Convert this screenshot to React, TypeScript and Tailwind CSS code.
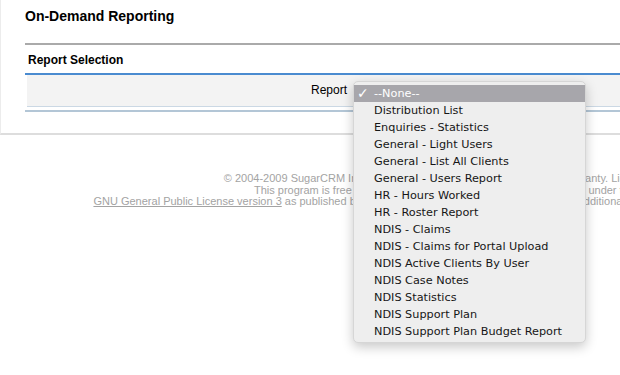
const reports = [
  "--None--",
  "Distribution List",
  "Enquiries - Statistics",
  "General - Light Users",
  "General - List All Clients",
  "General - Users Report",
  "HR - Hours Worked",
  "HR - Roster Report",
  "NDIS - Claims",
  "NDIS - Claims for Portal Upload",
  "NDIS Active Clients By User",
  "NDIS Case Notes",
  "NDIS Statistics",
  "NDIS Support Plan",
  "NDIS Support Plan Budget Report",
];

function ReportMenu({ selected }: { selected: string }) {
  return (
    <div className="absolute left-[353px] top-[81px] w-[233px] rounded-[5px] border border-[#d6d6d6] bg-[#eeeeee] pt-[3px] pb-[2px] font-['DejaVu_Sans',sans-serif] text-[11.25px] text-[#161616] shadow-[0_4px_12px_rgba(0,0,0,0.22)]">
      {reports.map((r) => {
        const active = r === selected;
        return (
          <div
            key={r}
            className={
              active
                ? "relative h-[17px] pl-[20px] leading-[17px] bg-[#a7a6ab] text-white"
                : "relative h-[17px] pl-[20px] leading-[17px]"
            }
          >
            {active && <span className="absolute left-[3px] top-[-1px] text-[14px] leading-[18px]">✓</span>}
            {r}
          </div>
        );
      })}
    </div>
  );
}

export default function App() {
  return (
    <div className="relative h-[375px] w-[620px] overflow-hidden bg-white font-['Liberation_Sans',Arial,sans-serif]">
      {/* Header + selection panel */}
      <div className="border-b-2 border-l border-b-[#dddddd] border-l-[#ececec]">
        <h1 className="h-[43px] pl-[24px] pt-[7px] text-[14px] font-bold leading-[18px] text-black">
          On-Demand Reporting
        </h1>

        <div className="ml-[24px]">
          <div className="flex h-[32px] items-center border-t-2 border-b-2 border-t-[#aaaaaa] border-b-[#4a8bd0] pl-[3px] pt-[2px] text-[12px] font-bold text-black">
            Report Selection
          </div>
          <div className="ml-[2px] flex h-[32px] border-b border-[#cbd8e4] bg-[#f3f3f3]">
            <label className="w-[320px] pt-[8px] text-right text-[12px] leading-[14px] text-black">Report</label>
          </div>
          <div className="h-[3px]" />
          <div className="h-[2px] bg-[#b3c6d6]" />
          <div className="h-[21px]" />
        </div>
      </div>

      {/* Footer */}
      <div className="pt-[38px]">
        <div className="w-[950px] text-center text-[11px] leading-[11.5px] text-[#a3a3a3]">
          © 2004-2009 SugarCRM Inc. The Program is provided AS IS, without warranty. Licensed under GPLv3.
          <br />
          This program is free software; you can redistribute it and/or modify it under the terms of the
          <br />
          <a className="underline">GNU General Public License version 3</a> as published by the Free Software
          Foundation including the additional permission set forth in the source code header.
        </div>
      </div>

      <ReportMenu selected="--None--" />
    </div>
  );
}
